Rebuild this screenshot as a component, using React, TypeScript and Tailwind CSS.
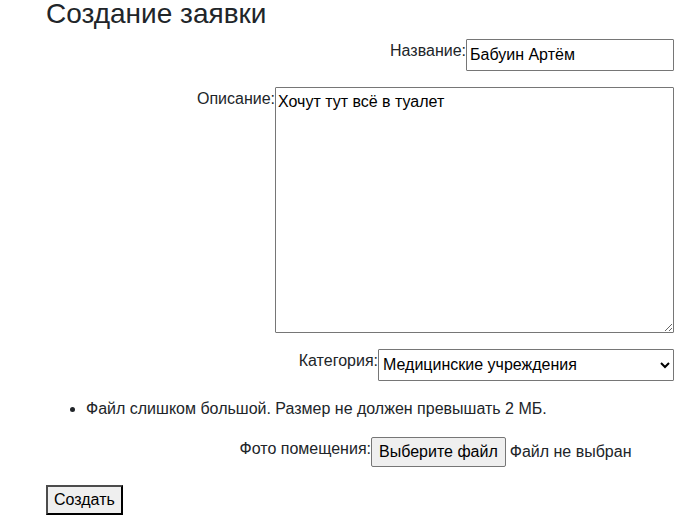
import React from "react";

const row = "mb-4 flex justify-end";
const field = "rounded-[1px] border border-[#767676] bg-white text-black";

export default function App() {
  return (
    <main className="min-h-screen bg-white pr-[22px] pl-[46px] font-['Liberation_Sans',Arial,sans-serif] text-base text-[#212529]">
      <h1 className="mb-[11px] text-[28px] leading-7">Создание заявки</h1>
      <form onSubmit={(e) => e.preventDefault()}>
        <div className={row}>
          <label htmlFor="title">Название:</label>
          <input id="title" type="text" defaultValue="Бабуин Артём" className={`${field} h-8 w-[208px] px-[3px]`} />
        </div>
        <div className={row}>
          <label htmlFor="description">Описание:</label>
          <textarea id="description" defaultValue="Хочут тут всё в туалет" className={`${field} h-[246px] w-[399px] resize p-0.5`} />
        </div>
        <div className={row}>
          <label htmlFor="category">Категория:</label>
          <select id="category" className={`${field} h-8 w-[296px] pb-0.5`}>
            <option>Медицинские учреждения</option>
          </select>
        </div>
        <ul className="mb-4 list-disc pl-10">
          <li>Файл слишком большой. Размер не должен превышать 2 МБ.</li>
        </ul>
        <div className={row}>
          <label htmlFor="photo">Фото помещения:</label>
          <div className="relative flex w-[303px] items-center gap-1">
            <input id="photo" type="file" className="sr-only" />
            <button type="button" onClick={() => document.getElementById("photo")?.click()} className="h-[30px] rounded-[2px] border border-[#767676] bg-[#efefef] px-[7px] text-black">
              Выберите файл
            </button>
            <span>Файл не выбран</span>
          </div>
        </div>
        <button type="submit" className="mt-0.5 h-[30px] border-2 border-t-[#4c4c4c] border-r-black border-b-black border-l-[#4c4c4c] bg-[#efefef] px-1.5 text-black">
          Создать
        </button>
      </form>
    </main>
  );
}
